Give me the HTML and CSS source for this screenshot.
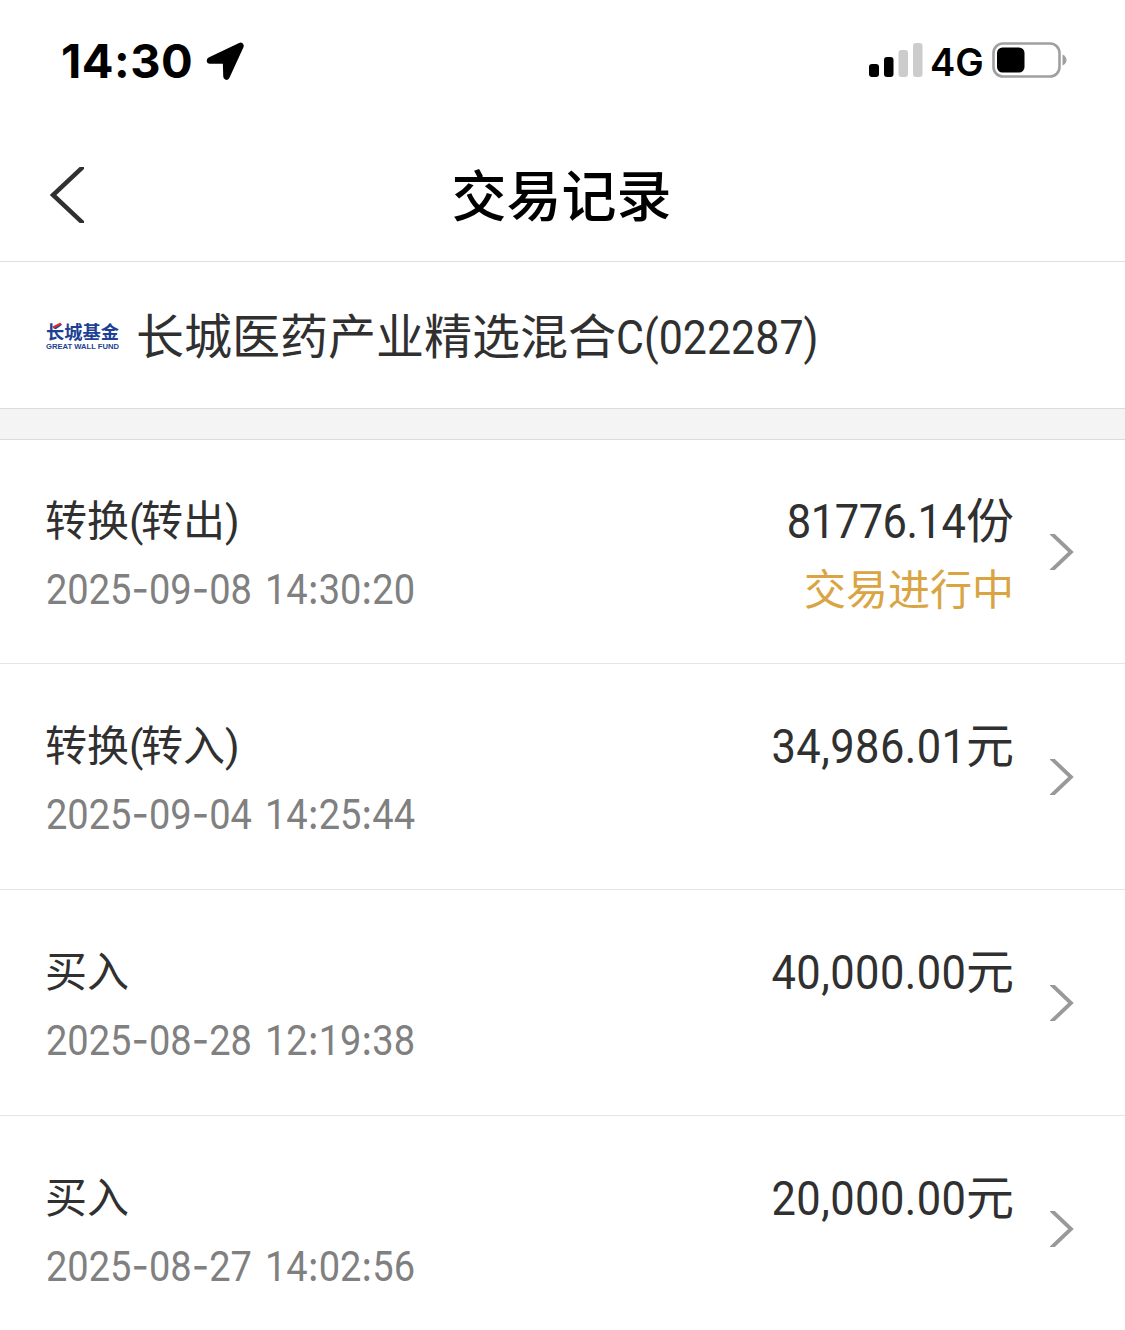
FILE: index.html
```
<!DOCTYPE html>
<html lang="zh-CN">
<head>
    <meta charset="UTF-8">
    <meta name="viewport" content="width=device-width, initial-scale=1.0">
    <title>交易记录</title>
    <link rel="stylesheet" href="styles.css">
</head>
<body>

<div class="status-bar">
    <div class="status-left">
        <span class="time">14:30</span>
        <svg class="location" width="40" height="40" viewBox="0 0 40 40">
            <path d="M4 19.500 L34.500 5 L20.500 35.500 L20 19.500 Z" stroke="#000" stroke-width="6.500" stroke-linejoin="round"/>
        </svg>
    </div>
    <div class="status-right">
        <svg width="54" height="34" viewBox="0 0 54 34">
            <rect x="0" y="21" width="10" height="13" rx="3"/>
            <rect x="15" y="14" width="9.500" height="20" rx="3"/>
            <rect x="29.500" y="7" width="9.500" height="27" rx="3" fill="#cccccc"/>
            <rect x="44" y="0" width="9.500" height="34" rx="3" fill="#cccccc"/>
        </svg>
        <span class="network">4G</span>
        <svg class="battery" width="75" height="36" viewBox="0 0 75 36">
            <rect x="1.500" y="1.500" width="66" height="33" rx="9.500" fill="none" stroke="#a0a0a0" stroke-width="2.600"/>
            <rect x="5" y="5.500" width="27.500" height="25" rx="5.500"/>
            <path d="M70.500 12.500 Q74.500 14.500 74.500 18 Q74.500 21.500 70.500 23.500 Z" fill="#a0a0a0"/>
        </svg>
    </div>
</div>

<div class="nav-bar">
    <svg class="back" width="34" height="56" viewBox="0 0 34 56">
        <path d="M34 -1 L3 28 L34 57" fill="none" stroke="#303030" stroke-width="4.500"/>
    </svg>
    <h1>交易记录</h1>
</div>

<div class="fund">
    <svg class="fund-logo" width="74" height="34" viewBox="0 0 74 34">
        <text class="logo-cn" x="0" y="21" textLength="73" lengthAdjust="spacingAndGlyphs">长城基金</text>
        <path d="M7 9.500 L15 5.500" stroke="#e02b2f" stroke-width="2.500"/>
        <text class="logo-en" x="0" y="31" textLength="73" lengthAdjust="spacingAndGlyphs">GREAT WALL FUND</text>
    </svg>
    <span class="fund-name">长城医药产业精选混合<span class="code">C(022287)</span></span>
</div>

<div class="gap"></div>

<div class="records">
    <div class="record">
        <div class="info">
            <div class="type">转换<i>(</i>转出<i>)</i></div>
            <div class="date">2025<i>-</i>09<i>-</i>08 14<i>:</i>30<i>:</i>20</div>
        </div>
        <div class="result">
            <div class="amount"><span class="num shares">81776.14</span>份</div>
            <div class="state">交易进行中</div>
        </div>
        <svg class="arrow" width="24" height="36" viewBox="0 0 24 36">
            <path d="M1 -1 L21 18 L1 37" fill="none" stroke="#999" stroke-width="3.800"/>
        </svg>
    </div>
    <div class="record">
        <div class="info">
            <div class="type">转换<i>(</i>转入<i>)</i></div>
            <div class="date">2025<i>-</i>09<i>-</i>04 14<i>:</i>25<i>:</i>44</div>
        </div>
        <div class="result">
            <div class="amount"><span class="num">34,986.01</span>元</div>
        </div>
        <svg class="arrow" width="24" height="36" viewBox="0 0 24 36">
            <path d="M1 -1 L21 18 L1 37" fill="none" stroke="#999" stroke-width="3.800"/>
        </svg>
    </div>
    <div class="record">
        <div class="info">
            <div class="type">买入</div>
            <div class="date">2025<i>-</i>08<i>-</i>28 12<i>:</i>19<i>:</i>38</div>
        </div>
        <div class="result">
            <div class="amount"><span class="num">40,000.00</span>元</div>
        </div>
        <svg class="arrow" width="24" height="36" viewBox="0 0 24 36">
            <path d="M1 -1 L21 18 L1 37" fill="none" stroke="#999" stroke-width="3.800"/>
        </svg>
    </div>
    <div class="record">
        <div class="info">
            <div class="type">买入</div>
            <div class="date">2025<i>-</i>08<i>-</i>27 14<i>:</i>02<i>:</i>56</div>
        </div>
        <div class="result">
            <div class="amount"><span class="num">20,000.00</span>元</div>
        </div>
        <svg class="arrow" width="24" height="36" viewBox="0 0 24 36">
            <path d="M1 -1 L21 18 L1 37" fill="none" stroke="#999" stroke-width="3.800"/>
        </svg>
    </div>
</div>

</body>
</html>
```
FILE: styles.css
```
* {
    box-sizing: border-box;
}
body {
    margin: 0;
    height: 1330px;
    overflow: hidden;
    background-color: #fff;
    color: #303030;
    font-family: Roboto, "Noto Sans CJK SC", sans-serif;
}
i {
    font-style: normal;
}
svg {
    display: block;
    flex-shrink: 0;
}
.status-bar {
    display: flex;
    justify-content: space-between;
    height: 128px;
    padding: 0 58px 0 61px;
    color: #000;
    font-family: Inter, sans-serif;
}
.status-left, .status-right {
    display: flex;
    align-items: center;
    height: 122px;
}
.status-right {
    height: 120px;
}
.time {
    width: 145px;
    padding-bottom: 2px;
    font-size: 47px;
    font-weight: 700;
    letter-spacing: 0.5px;
}
.network {
    width: 69px;
    padding: 3px 0 0 7px;
    font-size: 38px;
    font-weight: 600;
    line-height: 40px;
}
.nav-bar {
    display: flex;
    align-items: center;
    height: 134px;
    padding: 0 50px;
    border-bottom: 1px solid #dedede;
}
h1 {
    flex: 1;
    margin: 0 36px 0 0;
    padding-top: 5px;
    color: #000;
    font-size: 55px;
    font-weight: 500;
    line-height: 80px;
    text-align: center;
}
.fund {
    display: flex;
    align-items: center;
    height: 147px;
    padding-left: 46px;
    border-bottom: 1px solid #dcdcdc;
}
.fund-logo {
    overflow: visible;
}
.logo-cn {
    fill: #1d3f94;
    font: 700 18.5px "Noto Sans CJK SC", sans-serif;
}
.logo-en {
    fill: #1d3f94;
    font: 700 8px "Liberation Sans", sans-serif;
}
.fund-name {
    margin-left: 16px;
    padding-top: 6px;
    font-size: 48px;
    line-height: 70px;
}
/* narrow the digits a little */
.code, .num, .date {
    display: inline-block;
    transform: scaleX(0.905);
    transform-origin: left;
}
.code {
    transform: scaleX(0.895);
}
.gap {
    height: 31px;
    background-color: #f4f4f4;
    border-bottom: 1px solid #dcdcdc;
}
.record {
    display: flex;
    align-items: center;
    height: 226px;
    padding: 0 51px 0 46px;
    border-bottom: 1px solid #e5e5e5;
}
.record:first-child {
    height: 224px;
}
.info, .result {
    height: 138px;
    margin-top: 9px;
}
.record:first-child .info, .record:first-child .result {
    margin-top: 8px;
}
.info {
    flex: 1;
}
.type, .date, .state {
    font-size: 42px;
    line-height: 69px;
}
.type {
    height: 67px;
    margin-left: -1px;
}
.type i {
    letter-spacing: -2.5px;
}
.date {
    color: #808080;
    word-spacing: 4px;
}
.date i {
    font-family: Inter, sans-serif;
}
.result {
    margin-right: 36px;
    text-align: right;
}
.amount {
    font-size: 48px;
    line-height: 69px;
}
.num {
    letter-spacing: 0.5px;
    transform-origin: right;
}
.shares {
    letter-spacing: -0.5px;
}
.state {
    color: #d9a441;
}
```
